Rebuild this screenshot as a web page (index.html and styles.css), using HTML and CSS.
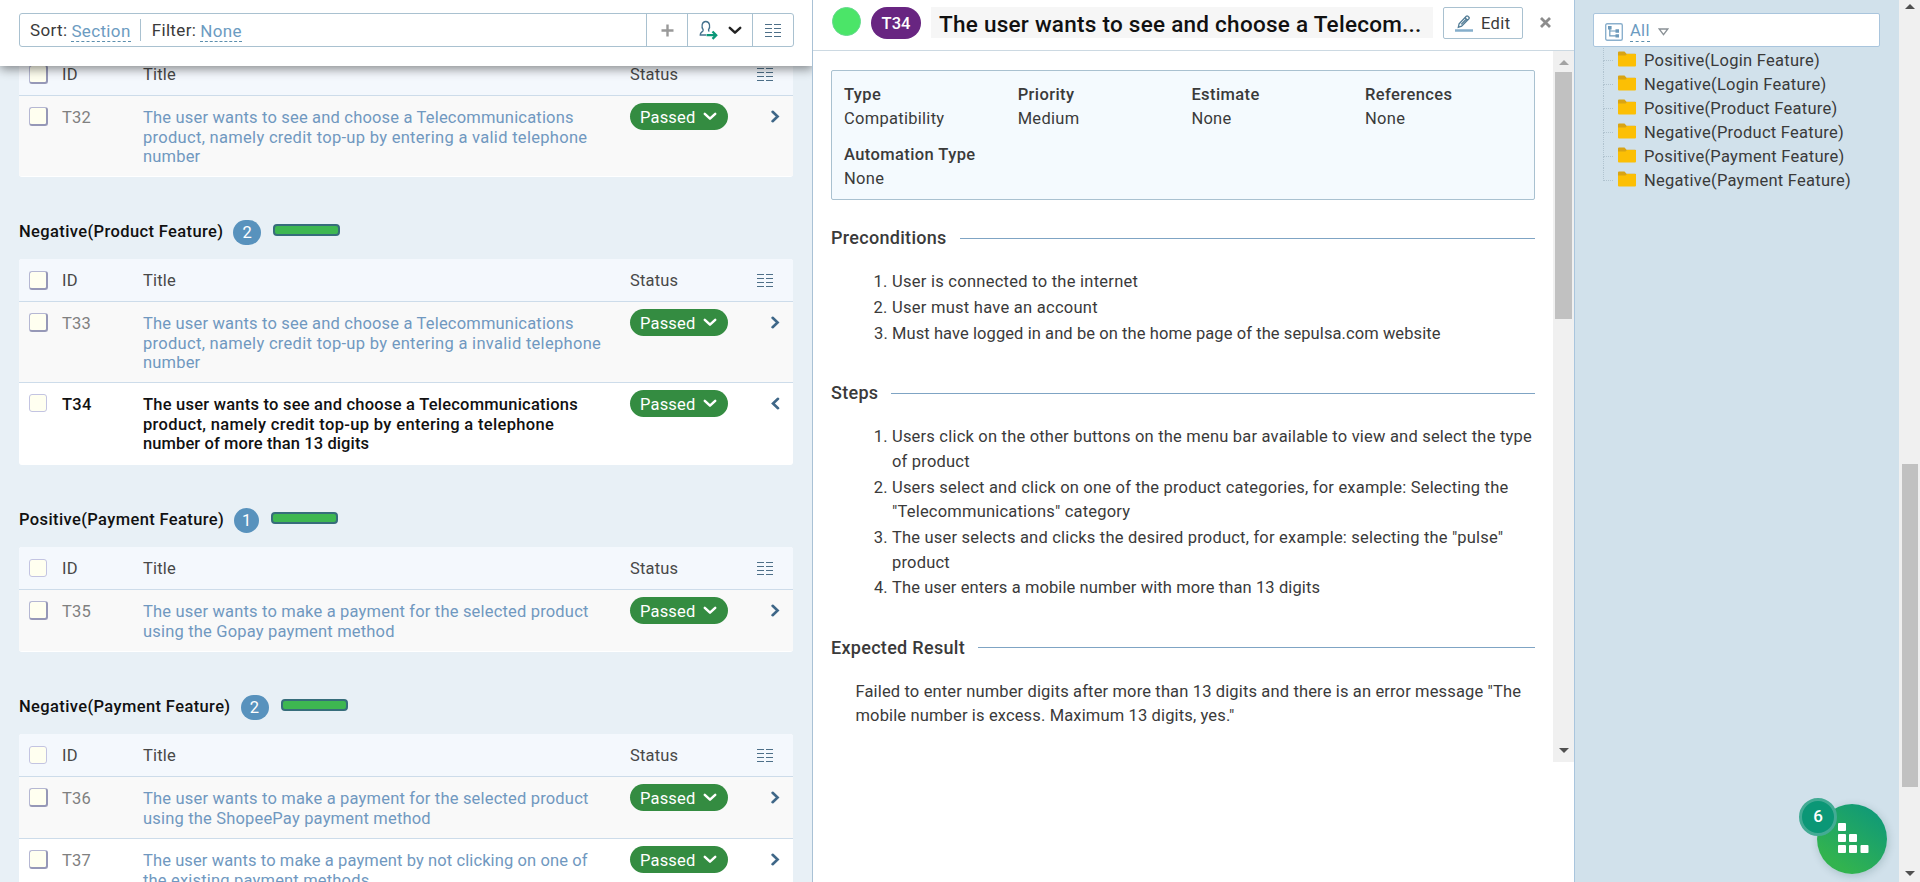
FILE: index.html
```html
<!DOCTYPE html>
<html lang="en">
<head>
<meta charset="utf-8">
<title>Test run</title>
<link rel="stylesheet" href="styles.css">
</head>
<body>
<svg class="defs" aria-hidden="true">
  <symbol id="cols" viewBox="0 0 16 14"><path d="M0 1.500h7M9 1.500h7M0 5.500h7M9 5.500h7M0 9.500h7M9 9.500h7M0 13.500h7M9 13.500h7" stroke="#4d6f88" stroke-width="1"/></symbol>
  <symbol id="down" viewBox="0 0 14 9"><path d="M1.800 1.800L7 6.600l5.200-4.800" fill="none" stroke="currentColor" stroke-width="2.500" stroke-linecap="round" stroke-linejoin="round"/></symbol>
  <symbol id="right" viewBox="0 0 9 13"><path d="M1.600 1.800l5 4.700-5 4.700" fill="none" stroke="#3f6788" stroke-width="2.600" stroke-linecap="round"/></symbol>
  <symbol id="left" viewBox="0 0 9 13"><path d="M7 1.800l-5 4.700 5 4.700" fill="none" stroke="#3f6788" stroke-width="2.600" stroke-linecap="round"/></symbol>
  <symbol id="folder" viewBox="0 0 18 16"><path d="M0 1.500Q0 .5 1 .5h5.500l2 2.200H17q1 0 1 1V8H0z" fill="#d9a414"/><path d="M0 4.500h7.500l1.500-1.500H17q1 0 1 1V14.500q0 1-1 1H1q-1 0-1-1z" fill="#fcbf04"/></symbol>
</svg>
<div class="app">
  <main class="runs">
    <div class="toolbar">
      <div class="toolbox">
        <div class="sort"><span>Sort:</span><a class="dash">Section</a><i class="sep"></i><span>Filter:</span><a class="dash">None</a></div>
        <div class="tool plus"><svg width="13" height="13" viewBox="0 0 13 13"><path d="M6.500 .5v12M.5 6.500h12" stroke="#999" stroke-width="2.400"/></svg></div>
        <div class="tool assign"><svg width="19" height="20" viewBox="0 0 19 20"><path d="M7 15H1.200C1 11.800 4.600 12 4.200 9.800 2.200 7 2.600 1.500 6.800 1.500s4.700 5.500 2.700 8.300c-.1.900.2 1.300.8 1.700" fill="none" stroke="#44718d" stroke-width="1.300"/><path d="M7.500 15.200h9M13.500 11.500l3.700 3.700-3.700 3.700" fill="none" stroke="#0a9878" stroke-width="2.300"/></svg><svg class="dark" width="14" height="9"><use href="#down"/></svg></div>
        <div class="tool grid"><svg width="16" height="14"><use href="#cols"/></svg></div>
      </div>
    </div>
    <div class="list">
      <section class="first">
        <div class="table">
          <div class="row head"><i class="cb"></i><span class="id">ID</span><span class="title">Title</span><span class="status">Status</span><svg class="gridicon" width="16" height="14"><use href="#cols"/></svg></div>
          <div class="row alt tall"><i class="cb"></i><span class="id">T32</span><a class="title">The user wants to see and choose a Telecommunications<br><span class="wide">product, namely credit top-up by entering a valid telephone</span><br>number</a><span class="pill">Passed<svg width="14" height="9"><use href="#down"/></svg></span><svg class="arrow" width="9" height="13"><use href="#right"/></svg></div>
        </div>
      </section>
      <section>
        <h2><span>Negative(Product Feature)</span><b class="count">2</b><i class="bar"></i></h2>
        <div class="table">
          <div class="row head"><i class="cb"></i><span class="id">ID</span><span class="title">Title</span><span class="status">Status</span><svg class="gridicon" width="16" height="14"><use href="#cols"/></svg></div>
          <div class="row alt tall"><i class="cb"></i><span class="id">T33</span><a class="title">The user wants to see and choose a Telecommunications<br><span class="wide">product, namely credit top-up by entering a invalid telephone</span><br>number</a><span class="pill">Passed<svg width="14" height="9"><use href="#down"/></svg></span><svg class="arrow" width="9" height="13"><use href="#right"/></svg></div>
          <div class="row active"><i class="cb flat"></i><span class="id">T34</span><a class="title">The user wants to see and choose a Telecommunications<br><span class="wide">product, namely credit top-up by entering a telephone</span><br><span class="snug">number of more than 13 digits</span></a><span class="pill">Passed<svg width="14" height="9"><use href="#down"/></svg></span><svg class="arrow" width="9" height="13"><use href="#left"/></svg></div>
        </div>
      </section>
      <section>
        <h2><span>Positive(Payment Feature)</span><b class="count one">1</b><i class="bar"></i></h2>
        <div class="table">
          <div class="row head"><i class="cb flat"></i><span class="id">ID</span><span class="title">Title</span><span class="status">Status</span><svg class="gridicon" width="16" height="14"><use href="#cols"/></svg></div>
          <div class="row alt"><i class="cb"></i><span class="id">T35</span><a class="title">The user wants to make a payment for the selected product<br>using the Gopay payment method</a><span class="pill">Passed<svg width="14" height="9"><use href="#down"/></svg></span><svg class="arrow" width="9" height="13"><use href="#right"/></svg></div>
        </div>
      </section>
      <section>
        <h2><span>Negative(Payment Feature)</span><b class="count">2</b><i class="bar"></i></h2>
        <div class="table">
          <div class="row head"><i class="cb flat"></i><span class="id">ID</span><span class="title">Title</span><span class="status">Status</span><svg class="gridicon" width="16" height="14"><use href="#cols"/></svg></div>
          <div class="row alt"><i class="cb"></i><span class="id">T36</span><a class="title">The user wants to make a payment for the selected product<br>using the ShopeePay payment method</a><span class="pill">Passed<svg width="14" height="9"><use href="#down"/></svg></span><svg class="arrow" width="9" height="13"><use href="#right"/></svg></div>
          <div class="row"><i class="cb"></i><span class="id">T37</span><a class="title"><span class="snug">The user wants to make a payment by not clicking on one of</span><br>the existing payment methods</a><span class="pill">Passed<svg width="14" height="9"><use href="#down"/></svg></span><svg class="arrow" width="9" height="13"><use href="#right"/></svg></div>
        </div>
      </section>
    </div>
  </main>

  <article class="detail">
    <header>
      <i class="dot"></i><span class="tag">T34</span>
      <h1>The user wants to see and choose a Telecom...</h1>
      <button class="edit"><svg width="18" height="17" viewBox="0 0 18 17"><path d="M3.300 12.300l.8-3.600 7.200-7.500q.8-.7 1.600 0l1 1q.7.8 0 1.600l-7.300 7.400zM10 2.700l2.500 2.500M11 4.500l-4.800 4.900" fill="none" stroke="#527c96" stroke-width="1.300"/><path d="M0 15.500h18" stroke="#85aecb" stroke-width="2.500"/></svg><span>Edit</span></button>
      <svg class="close" width="11" height="11" viewBox="0 0 11 11"><path d="M1 1l9 9M10 1l-9 9" stroke="#8c8c8c" stroke-width="2.800"/></svg>
    </header>
    <div class="scroller">
      <div class="content">
        <dl class="facts">
          <div><dt>Type</dt><dd>Compatibility</dd></div>
          <div><dt>Priority</dt><dd>Medium</dd></div>
          <div><dt>Estimate</dt><dd>None</dd></div>
          <div><dt>References</dt><dd>None</dd></div>
          <div><dt>Automation Type</dt><dd>None</dd></div>
        </dl>
        <h3>Preconditions</h3>
        <ol class="pre">
          <li>User is connected to the internet</li>
          <li>User must have an account</li>
          <li>Must have logged in and be on the home page of the sepulsa.com website</li>
        </ol>
        <h3>Steps</h3>
        <ol>
          <li>Users click on the other buttons on the menu bar available to view and select the type<br>of product</li>
          <li>Users select and click on one of the product categories, for example: Selecting the<br>"Telecommunications" category</li>
          <li>The user selects and clicks the desired product, for example: selecting the "pulse"<br>product</li>
          <li class="snug">The user enters a mobile number with more than 13 digits</li>
        </ol>
        <h3>Expected Result</h3>
        <p>Failed to enter number digits after more than 13 digits and there is an error message "The<br>mobile number is excess. Maximum 13 digits, yes."</p>
      </div>
      <div class="scrollbar"><i class="up light"></i><i class="thumb"></i><i class="dn"></i></div>
    </div>
  </article>

  <aside>
    <div class="pick"><svg width="18" height="18" viewBox="0 0 18 18"><rect x=".7" y=".7" width="16.600" height="16.600" rx="1.500" fill="none" stroke="#8bb0cd" stroke-width="1.400"/><path d="M4.800 5v7.800H11M4.800 8H11" fill="none" stroke="#6c99ba" stroke-width="1.200"/><path d="M3 3h3.600v3.400H3zM10.500 6.300H14v3.400h-3.500zM10.500 11.200H14v3.400h-3.500z" fill="#6c99ba"/></svg><a class="dash">All</a><svg width="11" height="8" viewBox="0 0 11 8"><path d="M1.200 1h8.600L5.500 6.700z" fill="none" stroke="#8a9196" stroke-width="1.300"/></svg></div>
    <ul>
      <li><svg width="18" height="16"><use href="#folder"/></svg>Positive(Login Feature)</li>
      <li><svg width="18" height="16"><use href="#folder"/></svg>Negative(Login Feature)</li>
      <li><svg width="18" height="16"><use href="#folder"/></svg>Positive(Product Feature)</li>
      <li><svg width="18" height="16"><use href="#folder"/></svg>Negative(Product Feature)</li>
      <li><svg width="18" height="16"><use href="#folder"/></svg>Positive(Payment Feature)</li>
      <li><svg width="18" height="16"><use href="#folder"/></svg>Negative(Payment Feature)</li>
    </ul>
  </aside>
  <div class="scrollbar page"><i class="up"></i><i class="thumb"></i><i class="dn"></i></div>
  <div class="widget"><svg width="31" height="31" viewBox="0 0 31 31" fill="#fff"><rect width="8" height="8" rx="1"/><rect y="11" width="8" height="8" rx="1"/><rect x="11" y="11" width="8" height="8" rx="1"/><rect y="22" width="8" height="8" rx="1"/><rect x="11" y="22" width="8" height="8" rx="1"/><rect x="22.500" y="22" width="8" height="8" rx="1"/></svg><b>6</b></div>
</div>
</body>
</html>
```
FILE: styles.css
```css
* { box-sizing: border-box; }
body { margin: 0; overflow: hidden; background: #fff; font: 16.5px/19.5px Roboto, "Liberation Sans", sans-serif; color: #3a3a3a; }
i, b { font-style: normal; font-weight: 400; }
svg { display: block; flex: none; }
.defs { position: absolute; width: 0; height: 0; }
.app { display: flex; height: 882px; position: relative; white-space: nowrap; }

.runs { width: 813px; height: 882px; flex: none; overflow: hidden; background: #e8f0f6; border-right: 1px solid #a9c1d5; }
.toolbar { position: relative; z-index: 2; width: 813px; height: 66px; padding: 13px 19px; background: #fff; box-shadow: 0 3px 10px rgba(0, 0, 0, .45); }
.toolbox { display: flex; width: 775px; height: 34px; border: 1px solid #a9c1d0; border-radius: 3px; }
.sort { display: flex; align-items: center; flex: 1; padding: 2px 0 0 10px; font-size: 17px; letter-spacing: .35px; }
.dash { color: #6c9bc1; border-bottom: 1px dashed #5c8fae; margin-left: 4px; line-height: 20px; margin-top: 1px; }
.sep { width: 1px; height: 22px; background: #a9c1d0; margin: -2px 11px 0 9px; }
.tool { display: flex; align-items: center; justify-content: center; border-left: 1px solid #a9c1d0; }
.plus { width: 41px; }
.assign { width: 65px; gap: 10px; }
.grid { width: 41px; }
.dark { color: #222; }

.list { margin-top: -13px; padding-left: 19px; }
.table { width: 774px; padding-bottom: 1px; border-radius: 3px; overflow: hidden; background: #fff; }
section { margin-bottom: 30px; }
.row { display: flex; align-items: flex-start; height: 62px; padding: 12px 0 0 10px; border-top: 1px solid #cddcea; letter-spacing: .18px; }
.row.head { background: #f4f8fd; border-top: 0; height: 42px; }
.row.alt { background: #f9f9f9; }
.row.tall { height: 81px; }
.row.active { height: 82px; }
.wide { letter-spacing: .3px; }
.snug { letter-spacing: .1px; }
.cb { width: 19px; height: 19px; flex: none; border: 1px solid #b5b7d3; border-right: 2px solid #9698b7; border-bottom: 2px solid #9698b7; border-radius: 3px; background: #fffff0; margin: -1px 14px 0 0; }
.cb.flat { width: 18px; height: 18px; margin-right: 15px; border: 1px solid #c3c4e2; }
.head .cb { margin-top: 0; }
.id { width: 81px; color: #808080; }
.head .id, .head .title, .head .status { color: #484848; }
.title { width: 487px; color: #7098c0; }
.pill { display: flex; align-items: center; gap: 8px; height: 27px; width: 98px; margin-top: -5px; padding: 3px 0 0 10px; border-radius: 14px; background: #348c41; color: #fff; }
.pill svg { margin-top: -4px; }
.arrow { margin: 2px 0 0 43px; }
.status { width: 127px; }
.gridicon { margin-top: 2px; }
.active .id, .active .title { color: #111; font-weight: 500; letter-spacing: .23px; }
.active .wide { letter-spacing: .34px; }
h2 { display: flex; align-items: center; height: 50px; margin: 0 0 2px; font-size: 16.5px; font-weight: 500; color: #111; letter-spacing: .38px; }
.count { width: 28px; height: 25px; margin: 0 12px 0 10px; border-radius: 13px; background: #5892bd; color: #fff; text-align: center; line-height: 26px; }
.count.one { width: 25px; }
.bar { width: 67px; height: 12px; margin-top: -5px; border: 2px solid #376d7b; border-radius: 4px; background: #3eb751; }

.detail { width: 762px; flex: none; border-right: 1px solid #a9c5dd; }
header { display: flex; align-items: flex-start; height: 51px; padding: 7px 0 0 19px; border-bottom: 1px solid #ccd9e2; }
.dot { width: 29px; height: 29px; border-radius: 50%; background: #4be568; border: 1px solid #63d98c; }
.tag { width: 50px; height: 32px; margin-left: 10px; border-radius: 16px; background: #682581; color: #fff; font-weight: 500; text-align: center; line-height: 33px; }
h1 { width: 502px; height: 31px; margin: 0 0 0 10px; padding-left: 8px; background: #f6f6f6; color: #111; font-size: 22.500px; line-height: 34px; font-weight: 500; letter-spacing: .26px; }
.edit { display: flex; gap: 8px; width: 80px; height: 32px; margin: 0 0 0 10px; padding: 7px 0 0 11px; background: #fff; border: 1px solid #a9c1d0; border-radius: 2px; font: inherit; color: #3a3a3a; line-height: 18px; letter-spacing: .4px; }
.close { margin: 10px 0 0 17px; }
.scroller { display: flex; height: 711px; }
.content { width: 740px; padding: 19px 18px 0 18px; }
.facts { display: grid; grid-template-columns: repeat(4, 173.700px); align-content: start; height: 130px; margin: 0; padding: 12px 0 0 12px; background: #f4fafe; border: 1px solid #a9c1d0; border-radius: 2px; line-height: 24px; letter-spacing: .28px; }
.facts div { height: 60px; }
dt { font-weight: 500; letter-spacing: .4px; }
dd { margin: 0; }
h3 { display: flex; align-items: center; gap: 13px; height: 24px; margin: 26px 0 20px; font-size: 18px; font-weight: 500; letter-spacing: .3px; }
h3::after { content: ""; flex: 1; height: 1px; background: #7fa4c4; }
ol { margin: 0 0 35px; padding-left: 61px; line-height: 24.600px; letter-spacing: .2px; }
li { margin-bottom: 1.200px; }
.pre li { letter-spacing: .26px; }
.pre li:last-child { letter-spacing: .08px; }
.content p { margin: 0 0 0 24.500px; line-height: 24.500px; letter-spacing: .14px; }
.scrollbar { position: relative; width: 21px; background: #f0f0f0; }
.thumb { position: absolute; left: 2px; top: 21px; width: 17px; height: 247px; background: #c1c1c1; }
.up, .dn { position: absolute; left: 6px; border: 5px solid transparent; }
.up { top: 4px; border-bottom-color: #505050; border-top: 0; }
.dn { bottom: 9px; border-top-color: #505050; border-bottom: 0; }
.up.light { top: 9px; border-bottom-color: #a3a3a3; }

aside { width: 324px; flex: none; padding: 13px 0 0 18px; background: #d1e1eb; }
.pick { display: flex; align-items: center; width: 287px; height: 34px; padding: 3px 0 0 11px; background: #fff; border: 1px solid #a9c5dd; border-radius: 2px; letter-spacing: .3px; }
.pick .dash { margin: 0 8px 0 7px; }
aside ul { list-style: none; margin: 1px 0 0 10px; padding: 0; }
aside li { display: flex; align-items: center; position: relative; height: 24px; margin: 0; padding: 1px 0 0 15px; letter-spacing: .27px; }
aside li::before { content: ""; position: absolute; left: 0; top: 0; width: 9px; height: 12px; border-left: 1px dotted #b0c3cf; border-bottom: 1px dotted #b0c3cf; }
aside li:not(:last-child)::after { content: ""; position: absolute; left: 0; top: 12px; height: 12px; border-left: 1px dotted #b0c3cf; }
aside li svg { margin: -3px 8px 0 0; }
.page .thumb { left: 3px; top: 464px; width: 16px; height: 323px; }
.page .up { left: 6px; }
.page .dn { bottom: 6px; }
.widget { position: absolute; left: 1817px; top: 804px; width: 70px; height: 70px; padding: 19px 0 0 21px; border-radius: 50%; background: linear-gradient(35deg, #32b34f 20%, #129b75 85%); box-shadow: 1px 2px 8px rgba(0, 60, 60, .2); }
.widget b { position: absolute; left: -18px; top: -6px; width: 38px; height: 38px; border: 3px solid #43ab94; border-radius: 50%; background: #0b9776; color: #fff; text-align: center; line-height: 31px; font-size: 17px; font-weight: 500; }
```
